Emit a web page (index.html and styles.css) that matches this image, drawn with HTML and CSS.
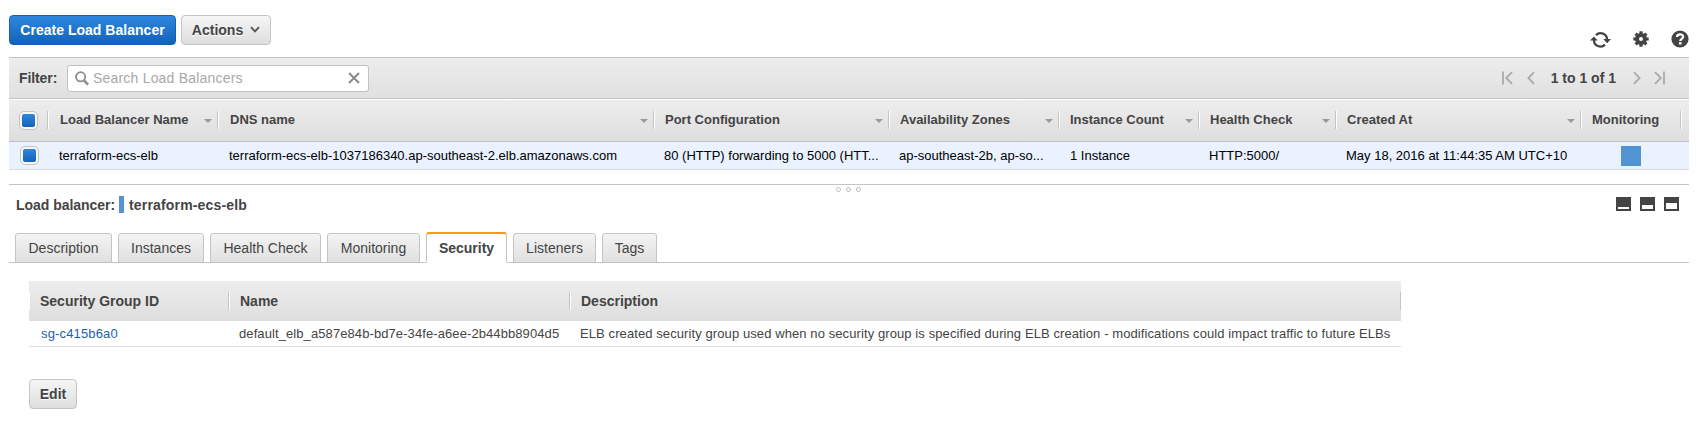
FILE: index.html
```html
<!DOCTYPE html>
<html lang="en">
<head>
<meta charset="utf-8">
<title>Load Balancers</title>
<link rel="stylesheet" href="styles.css">
</head>
<body>
<main class="console">
  <header class="toolbar">
    <button class="btn primary"><span class="t-create">Create Load Balancer</span></button>
    <button class="btn actions"><span>Actions</span><svg class="caret" width="10" height="8" viewBox="0 0 10 8"><path d="M1 1.2 5 5.4 9 1.2" fill="none" stroke="#555" stroke-width="1.9"/></svg></button>
    <div class="tools">
      <svg width="21" height="18" viewBox="0 0 21 18"><g fill="none" stroke="#444" stroke-width="2.3"><path d="M6 4.1A6.4 6.4 0 0 1 17 8.7"/><path d="M15 13.6A6.4 6.4 0 0 1 4 9"/></g><path d="M13.2 8H21L17.1 12.2ZM0 9.6H7.8L3.9 5.4Z" fill="#444"/></svg>
      <svg class="gear" width="16" height="16" viewBox="0 0 16 16"><g fill="none" stroke="#444"><circle cx="8" cy="8" r="4" stroke-width="4"/><path stroke-width="3.2" d="M8 .3V4M8 12v3.7M.3 8H4M12 8h3.7M2.6 2.6l2.6 2.6M10.8 10.8l2.6 2.6M13.4 2.6l-2.6 2.6M5.2 10.8l-2.6 2.6"/></g></svg>
      <svg class="help" width="18" height="18" viewBox="0 0 18 18"><circle cx="9" cy="9" r="8.6" fill="#444"/><path d="M6 7.1C6 3.3 12.1 3.5 12.1 6.8 12.1 8.9 9.3 8.8 9.3 11" fill="none" stroke="#fff" stroke-width="2.3"/><path d="M8 12.2h2.6v2.3H8z" fill="#fff"/></svg>
    </div>
  </header>

  <section class="filter">
    <label class="t-filter">Filter:</label>
    <div class="search">
      <svg width="14" height="15" viewBox="0 0 14 15"><circle cx="5.6" cy="5.8" r="4.6" fill="none" stroke="#8e8e8e" stroke-width="1.8"/><path d="m9 9.3 4 4.3" stroke="#8e8e8e" stroke-width="2.6"/></svg>
      <span class="placeholder">Search Load Balancers</span>
      <svg class="clear" width="12" height="12" viewBox="0 0 12 12"><path d="m1 1 10 10M11 1 1 11" stroke="#8a8a8a" stroke-width="2"/></svg>
    </div>
    <nav class="pager">
      <svg width="11" height="14" viewBox="0 0 11 14"><path d="M1 .5v13M10 1.2 4.2 7l5.8 5.8" fill="none" stroke="#aaa" stroke-width="1.8"/></svg>
      <svg class="prev" width="8" height="14" viewBox="0 0 8 14"><path d="M7 1.2 1.4 7 7 12.8" fill="none" stroke="#aaa" stroke-width="1.8"/></svg>
      <span>1 to 1 of 1</span>
      <svg class="next" width="8" height="14" viewBox="0 0 8 14"><path d="M1 1.2 6.6 7 1 12.8" fill="none" stroke="#aaa" stroke-width="1.8"/></svg>
      <svg class="last" width="11" height="14" viewBox="0 0 11 14"><path d="M10 .5v13M1 1.2 6.8 7 1 12.8" fill="none" stroke="#aaa" stroke-width="1.8"/></svg>
    </nav>
  </section>

  <section class="grid head">
    <div class="cell pick"><i class="check"></i></div>
    <div class="cell sort first">Load Balancer Name</div>
    <div class="cell sort">DNS name</div>
    <div class="cell sort inset">Port Configuration</div>
    <div class="cell sort inset">Availability Zones</div>
    <div class="cell sort inset">Instance Count</div>
    <div class="cell sort inset">Health Check</div>
    <div class="cell sort inset">Created At</div>
    <div class="cell inset">Monitoring</div>
  </section>
  <section class="grid row">
    <div class="cell pick"><i class="check"></i></div>
    <div class="cell">terraform-ecs-elb</div>
    <div class="cell">terraform-ecs-elb-1037186340.ap-southeast-2.elb.amazonaws.com</div>
    <div class="cell inset">80 (HTTP) forwarding to 5000 (HTT...</div>
    <div class="cell inset">ap-southeast-2b, ap-so...</div>
    <div class="cell">1 Instance</div>
    <div class="cell inset">HTTP:5000/</div>
    <div class="cell inset">May 18, 2016 at 11:44:35 AM UTC+10</div>
    <div class="cell mon"><i class="swatch"></i></div>
  </section>

  <div class="splitter"><i></i><i></i><i></i></div>

  <section class="title">
    <span class="t-lb">Load balancer:</span><i class="bar"></i><span class="t-name">terraform-ecs-elb</span>
    <div class="panes"><i class="pane low"></i><i class="pane mid"></i><i class="pane high"></i></div>
  </section>

  <nav class="tabs">
    <a class="tab w1">Description</a>
    <a class="tab w2">Instances</a>
    <a class="tab w3">Health Check</a>
    <a class="tab w4">Monitoring</a>
    <a class="tab w5 active">Security</a>
    <a class="tab w6">Listeners</a>
    <a class="tab w7">Tags</a>
  </nav>

  <section class="groups">
    <div class="sg sg-head">
      <div>Security Group ID</div>
      <div>Name</div>
      <div>Description</div>
    </div>
    <div class="sg sg-row">
      <div><a class="link">sg-c415b6a0</a></div>
      <div><span class="s-name">default_elb_a587e84b-bd7e-34fe-a6ee-2b44bb8904d5</span></div>
      <div><span class="s-desc">ELB created security group used when no security group is specified during ELB creation - modifications could impact traffic to future ELBs</span></div>
    </div>
  </section>
  <button class="btn edit">Edit</button>
</main>
</body>
</html>
```
FILE: styles.css
```css
* { box-sizing: border-box; }
body { margin: 0; background: #fff; color: #444; font: 14px/18px "Liberation Sans", Arial, sans-serif; }
svg { display: block; flex: none; }
i { display: block; flex: none; }
.console { width: 1680px; margin-left: 9px; padding-top: 15px; }

.toolbar { display: flex; height: 42px; gap: 5px; }
.btn { display: flex; align-items: center; justify-content: center; height: 30px; padding: 0; border: 1px solid #c4c4c4; border-radius: 4px; background: linear-gradient(#f5f5f5, #dedede); color: #444; font: bold 14px/18px "Liberation Sans", Arial, sans-serif; text-shadow: 0 1px 0 #fff; }
.primary { width: 167px; border-color: #1261b4; background: linear-gradient(#2f86de, #1263b8); color: #fff; text-shadow: none; }
.t-create { letter-spacing: .02px; }
.actions { width: 90px; gap: 7px; }
.caret { margin-bottom: 1px; }
.tools { display: flex; align-items: center; margin: 16px 0 0 auto; height: 18px; }
.gear { margin: 0 22px 2px; }
.help { margin-bottom: 2px; }

.filter { display: flex; align-items: center; height: 42px; border-top: 1px solid #c2c2c2; border-bottom: 1px solid #c2c2c2; background: linear-gradient(#ededed, #e0e0e0); padding-left: 10px; font-weight: bold; }
.t-filter { width: 38px; white-space: nowrap; letter-spacing: -.1px; }
.search { display: flex; align-items: center; width: 302px; height: 27px; margin-left: 10px; padding: 0 8px 0 7px; border: 1px solid #c2c2c2; border-radius: 3px; background: #fff; }
.placeholder { margin-left: 4px; color: #a8a8a8; font-weight: normal; letter-spacing: .2px; }
.clear { margin-left: auto; }
.pager { display: flex; align-items: center; margin: 0 24px 0 auto; }
.prev { margin: 0 16px 0 14px; }
.next { margin: 0 13px 0 17px; }

.grid { display: grid; grid-template-columns: 40px 170px 436px 235px 170px 140px 137px 245px 100px; font-size: 13px; }
.head { height: 43px; border-top: 1px solid #fff; border-bottom: 1px solid #c2c2c2; background: linear-gradient(#ededed, #dedede); font-weight: bold; padding: 11px 0 12px; }
.head .cell { display: flex; align-items: center; height: 18px; padding-left: 11px; border-right: 1px solid #fff; box-shadow: inset -1px 0 #c4c4c4; white-space: nowrap; }
.head .inset { padding-left: 10px; }
.sort::after { content: ""; margin: 1px 6px 0 auto; border: 4px solid transparent; border-top-color: #999; border-bottom: 0; }
.head .pick { padding-left: 10px; }
.check { display: flex; width: 19px; height: 19px; padding: 2px; border: 1px solid #c4c4c4; border-radius: 5px; background: #f6f6f6; }
.check::before { content: ""; flex: 1; border-radius: 2px; background: linear-gradient(#2f86de, #1263b8); margin: 0 1px 0 0; margin: 0; }
.row { height: 28px; background: #e9f2fe; border-bottom: 1px solid #d5d9e0; color: #000; }
.row .cell { display: flex; align-items: center; padding-left: 10px; white-space: nowrap; }
.row .inset { padding-left: 9px; }
.row .pick { padding-left: 11px; }
.row .mon { padding-left: 39px; }
.swatch { width: 20px; height: 20px; background: #5194d1; }

.splitter { display: flex; justify-content: center; gap: 5px; height: 12px; margin-top: 14px; padding: 2px 1px 0 0; border-top: 1px solid #c4c4c4; }
.splitter i { width: 5px; height: 5px; border: 1px solid #bbb; border-radius: 50%; }

.title { display: flex; align-items: center; height: 18px; padding: 0 10px 0 7px; font-weight: bold; }
.t-lb { width: 99px; white-space: nowrap; letter-spacing: -.04px; }
.t-name { letter-spacing: .17px; }
.bar { width: 5px; height: 17px; margin: 0 5px 1px 4px; background: #5194d1; }
.panes { display: flex; gap: 9px; margin: 0 0 2px auto; }
.pane { width: 15px; height: 14px; border: 2px solid #444; }
.low { border-top-width: 10px; }
.mid { border-top-width: 8px; }
.high { border-top-width: 6px; }

.tabs { display: flex; align-items: flex-end; gap: 6px; height: 32px; margin-top: 17px; padding-left: 6px; background: linear-gradient(#c4c4c4, #c4c4c4) bottom / 100% 1px no-repeat; }
.tab { display: flex; align-items: center; justify-content: center; height: 30px; border: 1px solid #c4c4c4; border-radius: 3px 3px 0 0; background: linear-gradient(#f3f3f3, #e0e0e0); }
.active { height: 31px; border-top: 2px solid #f90; border-bottom-color: #fff; background: #fff; font-weight: bold; }
.w1 { width: 97px; }
.w2 { width: 86px; }
.w3 { width: 111px; }
.w4 { width: 93px; }
.w5 { width: 81px; }
.w6 { width: 83px; }
.w7 { width: 55px; }

.groups { width: 1372px; margin: 18px 0 0 20px; }
.sg { display: grid; grid-template-columns: 200px 341px 831px; }
.sg-head { height: 40px; padding: 11px 0; background: linear-gradient(#ededed, #dedede); font-weight: bold; }
.sg-head div { padding-left: 10px; border-left: 1px solid #fff; box-shadow: inset -1px 0 #c4c4c4; }
.sg-row { height: 26px; align-items: center; border-bottom: 1px solid #ddd; font-size: 13px; white-space: nowrap; }
.sg-row div { padding-left: 10px; }
.sg-row div:first-child { padding-left: 12px; }
.link { color: #1a5fac; letter-spacing: .15px; }
.s-name { letter-spacing: .09px; }
.s-desc { letter-spacing: .093px; }
.edit { width: 48px; margin: 32px 0 0 20px; }
```
